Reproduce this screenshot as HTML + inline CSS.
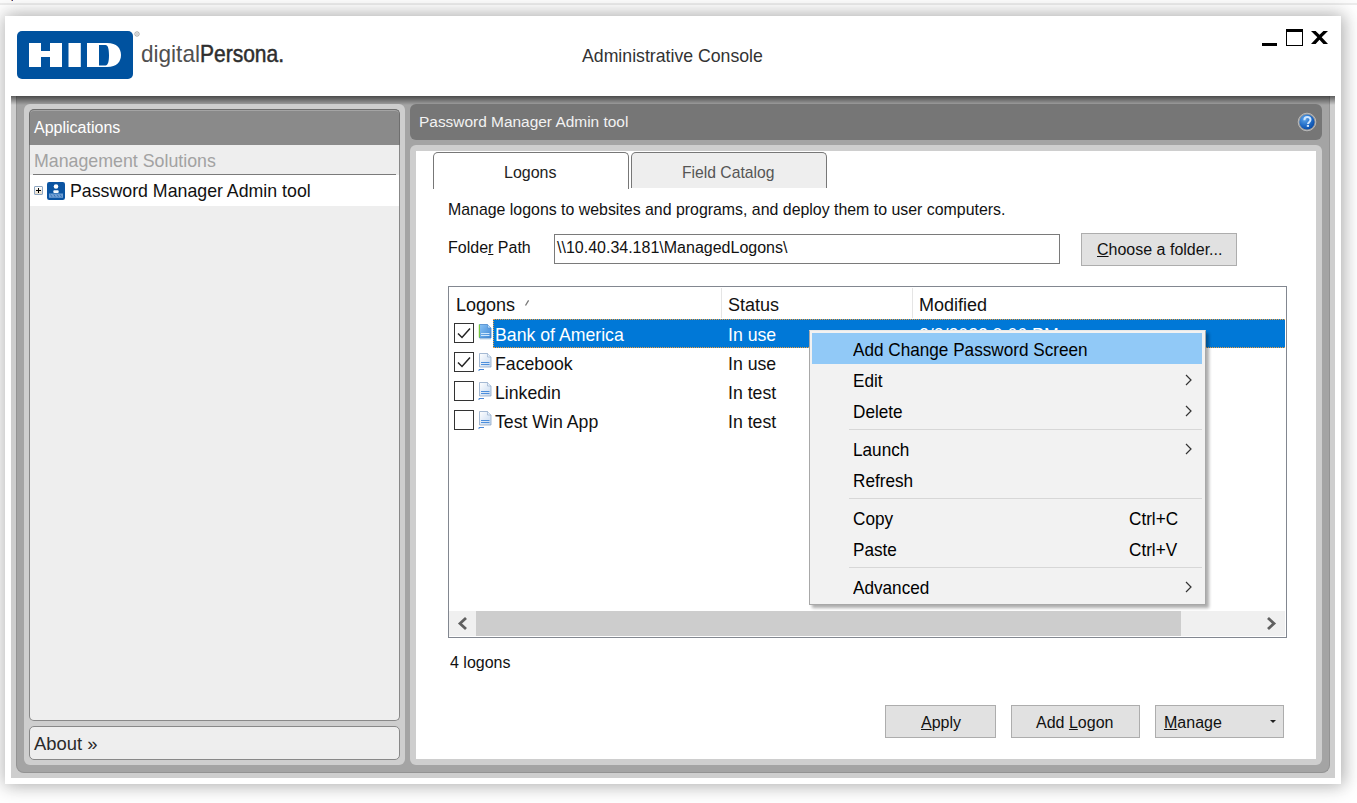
<!DOCTYPE html>
<html><head><meta charset="utf-8">
<style>
*{box-sizing:border-box;margin:0;padding:0}
html,body{width:1357px;height:803px;overflow:hidden;background:#fff;font-family:"Liberation Sans",sans-serif;position:relative}
.a{position:absolute}
.t{position:absolute;white-space:pre;line-height:1}
</style></head><body>
<!-- top strip -->
<div class="a" style="left:0;top:0;width:1357px;height:3px;background:#fcfcfc"></div>
<div class="a" style="left:0;top:3px;width:1357px;height:2px;background:#ececec"></div>
<div class="a" style="left:11px;top:0;width:1px;height:1px;background:#d0a070"></div><div class="a" style="left:12px;top:0;width:1px;height:1px;background:#3a3a90"></div>
<!-- window -->
<div class="a" style="left:5px;top:16px;width:1336px;height:768px;background:#fff;box-shadow:0 0 18px 2px rgba(0,0,0,0.25),4px 0 14px 0 rgba(0,0,0,0.1)"></div>

<!-- HID logo -->
<svg class="a" style="left:17px;top:31px" width="116" height="48" viewBox="0 0 116 48">
<rect x="0" y="0" width="116" height="48" rx="5" fill="#00529f"/>
<path fill="#fff" d="M12 12h12v8h9v-8h12v24h-12v-10h-9v10h-12z"/>
<path fill="#fff" d="M51.5 12h12.3v24h-12.3z"/>
<path fill="#fff" d="M70 12h20c10 0 14 5.5 14 12s-4 12-14 12h-20z M82 14v20.5h6.5c2.5 0 3.5-4 3.5-10.2s-1-10.3-3.5-10.3z"/>
</svg>
<svg class="a" style="left:134px;top:31px" width="6" height="6"><circle cx="3" cy="3" r="2.2" fill="none" stroke="#999" stroke-width="0.9"/><circle cx="3" cy="3" r="0.8" fill="#999"/></svg>
<div class="t" style="left:141px;top:41.8px;font-size:24px;color:#505050;transform:scaleX(0.94);transform-origin:0 0">digital</div>
<div class="t" style="left:200px;top:41.8px;font-size:24px;color:#2e2e2e;-webkit-text-stroke:0.5px #2e2e2e;transform:scaleX(0.875);transform-origin:0 0">Persona.</div>

<div class="t" style="left:582px;top:48px;font-size:17.7px;color:#333">Administrative Console</div>

<!-- window controls -->
<div class="a" style="left:1262px;top:43px;width:15px;height:3px;background:#000"></div>
<div class="a" style="left:1286px;top:29px;width:17px;height:17px;border:1px solid #000;border-top:3px solid #000"></div>
<svg class="a" style="left:1310px;top:30px" width="19" height="15" viewBox="0 0 19 15"><path d="M1 0.9h4.6l3.9 3.9L13.4 0.9h4.6l-6.3 6.3l6.3 6.8h-4.6L9.5 9.8L5.6 14H1l6.3-6.8z" fill="#000"/></svg>

<!-- frame -->
<div class="a" style="left:11px;top:96px;width:1324px;height:682px;background:#cecece"></div>
<div class="a" style="left:16px;top:96px;width:1314px;height:677px;background:#a4a4a4;border-radius:0 0 8px 8px;border:1px solid #939393;border-top:none"></div>
<div class="a" style="left:11px;top:96px;width:1324px;height:9px;background:linear-gradient(rgba(0,0,0,0.55),rgba(0,0,0,0))"></div>

<!-- left panel -->
<div class="a" style="left:24px;top:104px;width:381px;height:661px;background:#cecece;border-radius:6px"></div>
<div class="a" style="left:29px;top:109px;width:371px;height:36px;background:#8a8a8a;border:1px solid #6e6e6e;border-bottom:none;border-radius:5px 5px 0 0;box-shadow:inset 0 1px 0 #a4a4a4"></div>
<div class="a" style="left:29px;top:145px;width:371px;height:576px;background:#eeeeee;border:1px solid #888;border-top:none;border-radius:0 0 5px 5px"></div>
<div class="t" style="left:34px;top:120px;font-size:16px;color:#fff">Applications</div>
<div class="t" style="left:34px;top:153px;font-size:17.8px;color:#a2a2a2">Management Solutions</div>
<div class="a" style="left:33px;top:174px;width:363px;height:1px;background:#7a7a7a"></div>
<div class="a" style="left:30px;top:175px;width:369px;height:31px;background:#fff"></div>
<div class="a" style="left:34px;top:186px;width:9px;height:9px;border:1px solid #8ea6c2;border-radius:1px;background:linear-gradient(#fff,#e6dccb)"></div>
<div class="a" style="left:36px;top:190px;width:5px;height:1px;background:#000"></div>
<div class="a" style="left:38px;top:188px;width:1px;height:5px;background:#000"></div>
<svg class="a" style="left:47px;top:182px" width="18" height="18" viewBox="0 0 18 18">
<rect width="18" height="18" rx="2.2" fill="#0b54a2"/>
<circle cx="9" cy="4.5" r="2.3" fill="#fff"/>
<rect x="6.3" y="8.3" width="5.4" height="2.6" rx="1" fill="#f4f8fc"/>
<rect x="2" y="11.5" width="14" height="4.3" fill="#6f9fd4"/>
<path d="M3.5 12.5l1.5 2.3M6.8 12.5l1.5 2.3M10 12.5l1.5 2.3M13 12.5l1.5 2.3" stroke="#2a64ac" stroke-width="0.8"/>
</svg>
<div class="t" style="left:70px;top:183px;font-size:17.75px;color:#111">Password Manager Admin tool</div>

<div class="a" style="left:29px;top:726px;width:371px;height:34px;background:#eeeeee;border:1px solid #888;border-radius:5px"></div>
<div class="t" style="left:34px;top:735px;font-size:18.4px;color:#2a2a2a">About »</div>

<!-- right panel -->
<div class="a" style="left:410px;top:104px;width:912px;height:36px;background:#767676;border-radius:6px"></div>
<div class="t" style="left:419px;top:114.3px;font-size:15.45px;color:#f2f2f2">Password Manager Admin tool</div>
<svg class="a" style="left:1297px;top:112px" width="20" height="20" viewBox="0 0 20 20">
<defs><radialGradient id="hg" cx="0.35" cy="0.3" r="0.8"><stop offset="0" stop-color="#5fa6ea"/><stop offset="0.6" stop-color="#1d68c4"/><stop offset="1" stop-color="#0646a0"/></radialGradient></defs>
<circle cx="10" cy="10" r="8.8" fill="#999" stroke="#b8b8b8" stroke-width="1"/>
<circle cx="10" cy="10" r="7.6" fill="url(#hg)"/>
<path d="M7.4 8.2c0-2 1.3-3.2 3-3.2s3.1 1.1 3.1 2.8c0 2.3-2.5 2.4-2.5 4.3" fill="none" stroke="#cfe6ff" stroke-width="2"/>
<rect x="9.8" y="12.9" width="2.2" height="2" fill="#cfe6ff"/>
</svg>

<div class="a" style="left:410px;top:145px;width:912px;height:620px;background:#cecece;border-radius:6px"></div>
<div class="a" style="left:416px;top:151px;width:900px;height:608px;background:#fff"></div>

<!-- tabs -->
<div class="a" style="left:433px;top:152px;width:196px;height:37px;background:#fff;border:1px solid #777;border-bottom:none;border-radius:5px 5px 0 0"></div>
<div class="a" style="left:631px;top:152px;width:196px;height:36px;background:#eeeeee;border:1px solid #777;border-bottom:none;border-radius:5px 5px 0 0"></div>
<div class="t" style="left:504px;top:164.5px;font-size:16px;color:#222">Logons</div>
<div class="t" style="left:682px;top:164.5px;font-size:15.7px;color:#555">Field Catalog</div>

<div class="t" style="left:448px;top:202px;font-size:15.9px;color:#111">Manage logons to websites and programs, and deploy them to user computers.</div>
<div class="t" style="left:448px;top:240px;font-size:16px;color:#111">Folde<u>r</u> Path</div>
<div class="a" style="left:554px;top:234px;width:506px;height:30px;border:1px solid #7a7a7a;background:#fff"></div>
<div class="t" style="left:557px;top:240px;font-size:16px;color:#111">\\10.40.34.181\ManagedLogons\</div>
<div class="a" style="left:1081px;top:233px;width:156px;height:33px;border:1px solid #adadad;background:#e1e1e1"></div>
<div class="t" style="left:1097px;top:242px;font-size:16px;color:#111"><u>C</u>hoose a folder...</div>

<!-- listview -->
<div class="a" style="left:448px;top:286px;width:839px;height:352px;border:1px solid #828790;background:#fff"></div>
<div class="a" style="left:721px;top:288px;width:1px;height:30px;background:#e5e5e5"></div>
<div class="a" style="left:912px;top:288px;width:1px;height:30px;background:#e5e5e5"></div>
<div class="t" style="left:456px;top:296px;font-size:18px;color:#111">Logons</div>
<svg class="a" style="left:524px;top:299px" width="6" height="8"><path d="M1.5 6.5L4.6 1.3" stroke="#777" stroke-width="1.3"/></svg>
<div class="t" style="left:728px;top:296px;font-size:18px;color:#111">Status</div>
<div class="t" style="left:919px;top:296px;font-size:18px;color:#111">Modified</div>

<!-- selected row -->
<div class="a" style="left:493px;top:319px;width:792px;height:29px;background:#0078d7;border:1px dotted #f0a040;border-right:none"></div>
<div class="t" style="left:919px;top:327px;font-size:17.7px;color:#fff">2/3/2022 9:06 PM</div>

<div id="rows"></div>
<!-- checkboxes -->
<div class="a" style="left:454px;top:323px;width:20px;height:20px;border:1px solid #333;background:#fff"></div>
<div class="a" style="left:454px;top:352px;width:20px;height:20px;border:1px solid #333;background:#fff"></div>
<div class="a" style="left:454px;top:381px;width:20px;height:20px;border:1px solid #333;background:#fff"></div>
<div class="a" style="left:454px;top:410px;width:20px;height:20px;border:1px solid #333;background:#fff"></div>
<svg class="a" style="left:454px;top:323px" width="20" height="20"><path d="M4 10.5l4 4l8-9" fill="none" stroke="#222" stroke-width="1.5"/></svg>
<svg class="a" style="left:454px;top:352px" width="20" height="20"><path d="M4 10.5l4 4l8-9" fill="none" stroke="#222" stroke-width="1.5"/></svg>

<!-- doc icons -->
<svg class="a" style="left:478px;top:323px" width="16" height="18" viewBox="0 0 16 18">
<defs><linearGradient id="d1" x1="0" y1="0" x2="1" y2="1"><stop offset="0" stop-color="#8cc4f4"/><stop offset="1" stop-color="#3d86d6"/></linearGradient></defs>
<path d="M1.5 1.5h8l3.5 3.5v10h-11.5z" fill="url(#d1)" stroke="#4a88cc" stroke-width="0.8"/>
<path d="M9.5 1.5v3.5h3.5" fill="#b8dcf8" stroke="#4a88cc" stroke-width="0.6"/>
<path d="M3 10.5h8.5M3 12.5h8.5" stroke="#cfe6fb" stroke-width="1"/>
<path d="M1.3 1.5v13" stroke="#7ed321" stroke-width="1"/>
<path d="M2 16h11" stroke="#6a9ac8" stroke-width="0.8" opacity="0.5"/>
</svg>
<svg class="a" style="left:478px;top:352px" width="16" height="20" viewBox="0 0 16 20">
<defs><linearGradient id="d352" x1="0" y1="0" x2="1" y2="1"><stop offset="0" stop-color="#ffffff"/><stop offset="1" stop-color="#c4d8f0"/></linearGradient></defs>
<path d="M1.5 1.5h8l3.5 3.5v10h-11.5z" fill="url(#d352)" stroke="#8fa8c8" stroke-width="0.8"/>
<path d="M9.5 1.5v3.5h3.5" fill="#e6f0fb" stroke="#8fa8c8" stroke-width="0.6"/>
<path d="M3 10.5h8.5M3 12.5h8.5" stroke="#4d8fdc" stroke-width="1"/>
<path d="M1 19v-1.5h5" fill="none" stroke="#4a88d8" stroke-width="1"/>
</svg>
<svg class="a" style="left:478px;top:381px" width="16" height="20" viewBox="0 0 16 20">
<defs><linearGradient id="d381" x1="0" y1="0" x2="1" y2="1"><stop offset="0" stop-color="#ffffff"/><stop offset="1" stop-color="#c4d8f0"/></linearGradient></defs>
<path d="M1.5 1.5h8l3.5 3.5v10h-11.5z" fill="url(#d381)" stroke="#8fa8c8" stroke-width="0.8"/>
<path d="M9.5 1.5v3.5h3.5" fill="#e6f0fb" stroke="#8fa8c8" stroke-width="0.6"/>
<path d="M3 10.5h8.5M3 12.5h8.5" stroke="#4d8fdc" stroke-width="1"/>
<path d="M1 19v-1.5h5" fill="none" stroke="#4a88d8" stroke-width="1"/>
</svg>
<svg class="a" style="left:478px;top:410px" width="16" height="20" viewBox="0 0 16 20">
<defs><linearGradient id="d410" x1="0" y1="0" x2="1" y2="1"><stop offset="0" stop-color="#ffffff"/><stop offset="1" stop-color="#c4d8f0"/></linearGradient></defs>
<path d="M1.5 1.5h8l3.5 3.5v10h-11.5z" fill="url(#d410)" stroke="#8fa8c8" stroke-width="0.8"/>
<path d="M9.5 1.5v3.5h3.5" fill="#e6f0fb" stroke="#8fa8c8" stroke-width="0.6"/>
<path d="M3 10.5h8.5M3 12.5h8.5" stroke="#4d8fdc" stroke-width="1"/>
<path d="M1 19v-1.5h5" fill="none" stroke="#4a88d8" stroke-width="1"/>
</svg>
<div class="t" style="left:495px;top:327px;font-size:17.7px;color:#fff">Bank of America</div>
<div class="t" style="left:728px;top:327px;font-size:17.7px;color:#fff">In use</div>
<div class="t" style="left:495px;top:356px;font-size:17.7px;color:#111">Facebook</div>
<div class="t" style="left:728px;top:356px;font-size:17.7px;color:#111">In use</div>
<div class="t" style="left:495px;top:385px;font-size:17.7px;color:#111">Linkedin</div>
<div class="t" style="left:728px;top:385px;font-size:17.7px;color:#111">In test</div>
<div class="t" style="left:495px;top:414px;font-size:17.7px;color:#111">Test Win App</div>
<div class="t" style="left:728px;top:414px;font-size:17.7px;color:#111">In test</div>

<!-- scrollbar -->
<div class="a" style="left:449px;top:611px;width:836px;height:25px;background:#f0f0f0"></div>
<div class="a" style="left:476px;top:611px;width:705px;height:25px;background:#cdcdcd"></div>
<svg class="a" style="left:455px;top:616px" width="16" height="16"><path d="M11 2L5 7.5l6 5.5" fill="none" stroke="#606060" stroke-width="2.8"/></svg>
<svg class="a" style="left:1263px;top:616px" width="16" height="16"><path d="M5 2l6 5.5l-6 5.5" fill="none" stroke="#606060" stroke-width="2.8"/></svg>

<div class="t" style="left:450px;top:655px;font-size:16px;color:#111">4 logons</div>

<!-- buttons -->
<div class="a" style="left:885px;top:705px;width:111px;height:33px;border:1px solid #adadad;background:#e1e1e1"></div>
<div class="t" style="left:921px;top:714.5px;font-size:16px;color:#111"><u>A</u>pply</div>
<div class="a" style="left:1011px;top:705px;width:129px;height:33px;border:1px solid #adadad;background:#e1e1e1"></div>
<div class="t" style="left:1036px;top:714.5px;font-size:16px;color:#111">Add <u>L</u>ogon</div>
<div class="a" style="left:1155px;top:705px;width:129px;height:33px;border:1px solid #adadad;background:#e1e1e1"></div>
<div class="t" style="left:1164px;top:714.5px;font-size:16px;color:#111"><u>M</u>anage</div>
<div class="a" style="left:1270px;top:720px;width:0;height:0;border-left:3px solid transparent;border-right:3px solid transparent;border-top:3px solid #222"></div>

<!-- context menu -->
<div class="a" style="left:809px;top:330px;width:397px;height:275px;background:#f2f2f2;border:1px solid #a8a8a8;border-top-color:#e8e8e8;box-shadow:3px 3px 3px rgba(0,0,0,0.32)"></div>
<div class="a" style="left:812px;top:333px;width:390px;height:31px;background:#91c9f7"></div>
<div class="t" style="left:853px;top:342px;font-size:17.7px;color:#000;transform:scaleX(0.97);transform-origin:0 0">Add Change Password Screen</div>
<div class="t" style="left:853px;top:373px;font-size:17.7px;color:#000;transform:scaleX(0.97);transform-origin:0 0">Edit</div>
<div class="t" style="left:853px;top:404px;font-size:17.7px;color:#000;transform:scaleX(0.97);transform-origin:0 0">Delete</div>
<div class="a" style="left:849px;top:429px;width:353px;height:1px;background:#d7d7d7"></div>
<div class="t" style="left:853px;top:442px;font-size:17.7px;color:#000;transform:scaleX(0.97);transform-origin:0 0">Launch</div>
<div class="t" style="left:853px;top:473px;font-size:17.7px;color:#000;transform:scaleX(0.97);transform-origin:0 0">Refresh</div>
<div class="a" style="left:849px;top:498px;width:353px;height:1px;background:#d7d7d7"></div>
<div class="t" style="left:853px;top:511px;font-size:17.7px;color:#000;transform:scaleX(0.97);transform-origin:0 0">Copy</div>
<div class="t" style="left:1129px;top:511px;font-size:17.7px;color:#000;transform:scaleX(0.97);transform-origin:0 0">Ctrl+C</div>
<div class="t" style="left:853px;top:542px;font-size:17.7px;color:#000;transform:scaleX(0.97);transform-origin:0 0">Paste</div>
<div class="t" style="left:1129px;top:542px;font-size:17.7px;color:#000;transform:scaleX(0.97);transform-origin:0 0">Ctrl+V</div>
<div class="a" style="left:849px;top:567px;width:353px;height:1px;background:#d7d7d7"></div>
<div class="t" style="left:853px;top:580px;font-size:17.7px;color:#000;transform:scaleX(0.97);transform-origin:0 0">Advanced</div>
<svg class="a" style="left:1184px;top:373px" width="10" height="14"><path d="M2 2l5 5l-5 5" fill="none" stroke="#333" stroke-width="1.2"/></svg>
<svg class="a" style="left:1184px;top:404px" width="10" height="14"><path d="M2 2l5 5l-5 5" fill="none" stroke="#333" stroke-width="1.2"/></svg>
<svg class="a" style="left:1184px;top:442px" width="10" height="14"><path d="M2 2l5 5l-5 5" fill="none" stroke="#333" stroke-width="1.2"/></svg>
<svg class="a" style="left:1184px;top:580px" width="10" height="14"><path d="M2 2l5 5l-5 5" fill="none" stroke="#333" stroke-width="1.2"/></svg>
</body></html>
